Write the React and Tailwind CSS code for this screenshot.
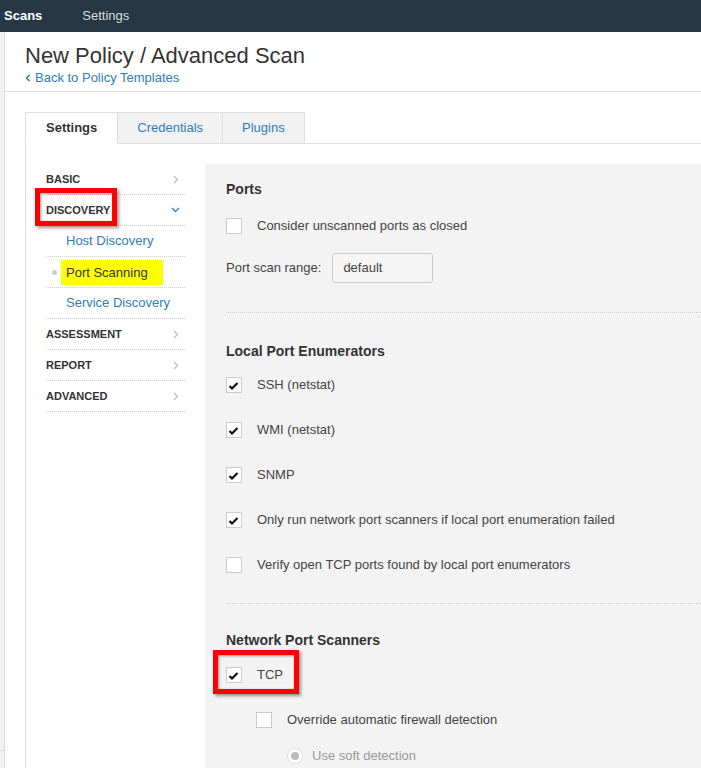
import React from 'react';

const sections = [
  { key: 'basic', label: 'BASIC' },
  { key: 'discovery', label: 'DISCOVERY', open: true },
  { key: 'host', label: 'Host Discovery', sub: true },
  { key: 'port', label: 'Port Scanning', sub: true, current: true },
  { key: 'service', label: 'Service Discovery', sub: true },
  { key: 'assessment', label: 'ASSESSMENT' },
  { key: 'report', label: 'REPORT' },
  { key: 'advanced', label: 'ADVANCED' },
];

// red annotation frame drawn over a row
const Marker = ({ className }) => (
  <div
    className={`pointer-events-none absolute border-[5px] border-[#ff0000] shadow-[2px_2px_3px_rgba(0,0,0,0.4),inset_1px_1px_3px_rgba(0,0,0,0.4)] ${className}`}
  />
);

const ChevronRight = () => (
  <svg width="6" height="9" viewBox="0 0 6 9" className="text-[#bbbbbb]">
    <path d="M1 1 L4.5 4.5 L1 8" fill="none" stroke="currentColor" strokeWidth="1.2" />
  </svg>
);

const ChevronDown = () => (
  <svg width="9" height="6" viewBox="0 0 9 6" className="text-[#3a86b8]">
    <path d="M1 1 L4.5 4.5 L8 1" fill="none" stroke="currentColor" strokeWidth="1.4" />
  </svg>
);

const Checkbox = ({ checked }) => (
  <span className="flex h-[16px] w-[16px] shrink-0 items-center justify-center border border-[#cccccc] bg-white">
    {checked && (
      <svg width="14" height="14" viewBox="0 0 14 14">
        <path d="M2.5 8 L5 10.5 L10.5 5" fill="none" stroke="#111" strokeWidth="2.2" />
      </svg>
    )}
  </span>
);

const CheckRow = ({ checked, label, className = '', marker }) => (
  <div className={`relative flex h-[30px] items-center gap-[15px] ${className}`}>
    <Checkbox checked={checked} />
    <span className="text-[13px] text-[#444444]">{label}</span>
    {marker && <Marker className="-left-[13px] -top-[10px] h-[44px] w-[86px]" />}
  </div>
);

const SectionTitle = ({ children, className = '' }) => (
  <h3 className={`h-[20px] text-[14px] font-bold leading-[20px] text-[#333333] ${className}`}>{children}</h3>
);

const Sidebar = () => (
  <ul className="w-[139px] shrink-0">
    {sections.map((s) => (
      <li
        key={s.key}
        className="relative flex h-[31px] items-center justify-between border-b border-dotted border-[#cccccc]"
      >
        {s.sub ? (
          <div className="flex items-center">
            <span className={`ml-[6px] h-[5px] w-[5px] rounded-full ${s.current ? 'bg-[#cccccc]' : 'bg-transparent'}`} />
            {s.current ? (
              <span className="ml-[4px] bg-[#ffff00] pl-[5px] pr-[15px] text-[13px] leading-[25px] text-[#333333]">
                {s.label}
              </span>
            ) : (
              <span className="ml-[9px] text-[13px] text-[#2e7dbb]">{s.label}</span>
            )}
          </div>
        ) : (
          <>
            <span className="text-[11px] font-bold text-[#333333]">{s.label}</span>
            <span className="mr-[5px] flex w-[9px] justify-center">{s.open ? <ChevronDown /> : <ChevronRight />}</span>
          </>
        )}
        {s.key === 'discovery' && <Marker className="-left-[11px] -top-[7px] h-[38px] w-[82px]" />}
      </li>
    ))}
  </ul>
);

const PortSettings = () => (
  <div className="flex-1 bg-[#f3f3f3] pl-[21px] pt-[15px]">
    <SectionTitle>Ports</SectionTitle>
    <CheckRow className="mt-[12px]" label="Consider unscanned ports as closed" />
    <div className="mt-[12px] flex items-center gap-[11px]">
      <span className="text-[13px] text-[#444444]">Port scan range:</span>
      <div className="flex h-[30px] w-[101px] items-center rounded-[3px] border border-[#cccccc] bg-[#f5f5f5] px-[10px] text-[13px] text-[#444444]">
        default
      </div>
    </div>
    <div className="mt-[29px] border-t border-dotted border-[#cccccc]" />

    <SectionTitle className="mt-[28px]">Local Port Enumerators</SectionTitle>
    <div className="mt-[9px] flex flex-col gap-[15px]">
      <CheckRow checked label="SSH (netstat)" />
      <CheckRow checked label="WMI (netstat)" />
      <CheckRow checked label="SNMP" />
      <CheckRow checked label="Only run network port scanners if local port enumeration failed" />
      <CheckRow label="Verify open TCP ports found by local port enumerators" />
    </div>
    <div className="mt-[23px] border-t border-dotted border-[#cccccc]" />

    <SectionTitle className="mt-[26px]">Network Port Scanners</SectionTitle>
    <CheckRow className="mt-[10px] w-fit" checked label="TCP" marker />
    <CheckRow className="ml-[30px] mt-[15px]" label="Override automatic firewall detection" />
    <div className="ml-[61px] mt-[6px] flex h-[30px] items-center gap-[9px]">
      <span className="flex h-[16px] w-[16px] items-center justify-center rounded-full border border-[#dddddd] bg-white">
        <span className="h-[8px] w-[8px] rounded-full bg-[#bbbbbb]" />
      </span>
      <span className="text-[13px] text-[#999999]">Use soft detection</span>
    </div>
  </div>
);

const App = () => {
  const tabs = ['Settings', 'Credentials', 'Plugins'];

  return (
    <div className="h-screen overflow-hidden bg-white font-['Liberation_Sans',Arial,sans-serif]">
      <div className="flex h-[32px] items-center bg-[#263746] pl-[4px]">
        <span className="text-[13px] font-bold text-white">Scans</span>
        <span className="ml-[40px] text-[13px] text-[#dddddd]">Settings</span>
      </div>

      <div className="flex">
        <div className="w-[5px] shrink-0 border-r border-[#dddddd] bg-[#f2f2f2]">
          <div className="h-[719px] border-b border-[#dddddd]" />
        </div>

        <div className="flex-1">
          <div className="border-b border-[#dddddd] pb-[5px] pl-[20px] pt-[11px]">
            <h1 className="text-[22px] leading-[26px] text-[#333333]">New Policy / Advanced Scan</h1>
            <a className="mt-[1px] flex items-center gap-[4px] text-[13px] leading-[16px] text-[#2e7dbb]">
              <svg width="6" height="8" viewBox="0 0 6 8">
                <path d="M4.5 1 L1.5 4 L4.5 7" fill="none" stroke="currentColor" strokeWidth="1.6" />
              </svg>
              Back to Policy Templates
            </a>
          </div>

          <div className="pl-[20px] pt-[20px]">
            <div className="flex border-b border-[#dddddd]">
              {tabs.map((t, i) => (
                <div
                  key={t}
                  className={`-mb-px flex h-[32px] items-center border border-[#dddddd] text-[13px] ${
                    i > 0 ? 'border-l-0 px-[19px]' : 'px-[20px]'
                  } ${
                    i === 0
                      ? 'border-b-white bg-white font-bold text-[#333333]'
                      : 'bg-[#f2f2f2] text-[#2e7dbb]'
                  }`}
                >
                  {t}
                </div>
              ))}
            </div>

            <div className="flex h-[700px] gap-[20px] border-l border-[#dddddd] pl-[20px] pt-[20px]">
              <Sidebar />
              <PortSettings />
            </div>
          </div>
        </div>
      </div>
    </div>
  );
};

export default App;
